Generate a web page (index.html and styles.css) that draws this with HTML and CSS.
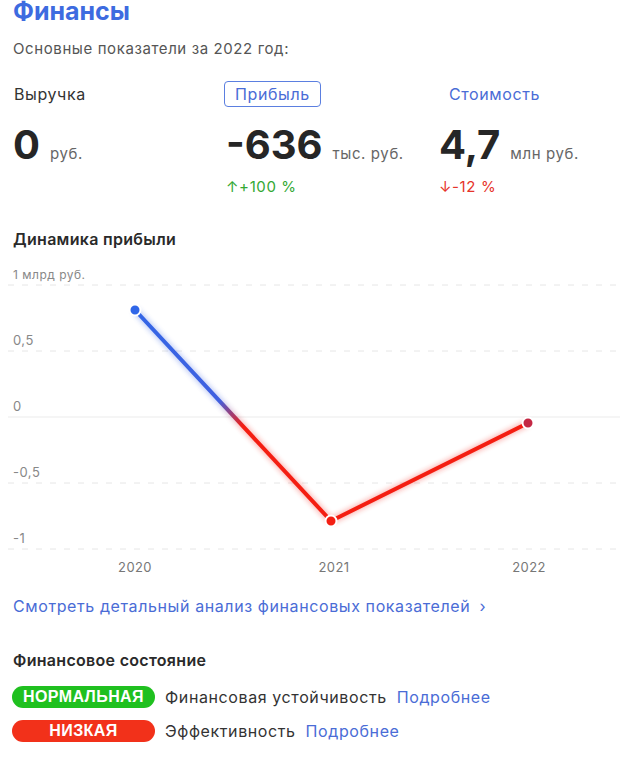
FILE: index.html
```html
<!DOCTYPE html>
<html lang="ru">
<head>
<meta charset="utf-8">
<link rel="stylesheet" href="styles.css">
</head>
<body>
<div class="page">
  <h1 class="title">Финансы</h1>
  <p class="subtitle">Основные показатели за 2022 год:</p>

  <div class="metrics">
    <div class="metric">
      <div class="tab">Выручка</div>
      <div class="value"><span class="num">0</span><span class="unit">руб.</span></div>
    </div>
    <div class="metric">
      <div class="tab tab-active">Прибыль</div>
      <div class="value"><span class="num">-636</span><span class="unit">тыс. руб.</span></div>
      <div class="delta up">↑+100 %</div>
    </div>
    <div class="metric">
      <div class="tab tab-link">Стоимость</div>
      <div class="value"><span class="num">4,7</span><span class="unit">млн руб.</span></div>
      <div class="delta down">↓-12 %</div>
    </div>
  </div>

  <h2 class="section">Динамика прибыли</h2>

  <svg class="chart" width="620" height="320" viewBox="0 260 620 320">
    <defs>
      <linearGradient id="lg1" gradientUnits="userSpaceOnUse" x1="135" y1="310" x2="331" y2="521">
        <stop offset="0" stop-color="#3366e6"/>
        <stop offset="0.43" stop-color="#4060e0"/>
        <stop offset="0.55" stop-color="#f41e12"/>
        <stop offset="1" stop-color="#f41e12"/>
      </linearGradient>
      <filter id="glow" x="-20%" y="-20%" width="140%" height="140%">
        <feGaussianBlur stdDeviation="2.5"/>
      </filter>
    </defs>
    <g class="grid">
      <line x1="8" y1="285" x2="620" y2="285" class="dash"/>
      <line x1="8" y1="351" x2="620" y2="351" class="dash"/>
      <line x1="8" y1="417" x2="620" y2="417" class="zero"/>
      <line x1="8" y1="483" x2="620" y2="483" class="dash"/>
      <line x1="8" y1="549" x2="620" y2="549" class="dash"/>
    </g>
    <g class="ylabels">
      <text x="13" y="279" class="top">1 млрд руб.</text>
      <text x="13" y="345">0,5</text>
      <text x="13" y="411">0</text>
      <text x="13" y="477">-0,5</text>
      <text x="13" y="543">-1</text>
    </g>
    <g class="xlabels">
      <text x="135" y="572">2020</text>
      <text x="334" y="572">2021</text>
      <text x="529" y="572">2022</text>
    </g>
    <g filter="url(#glow)" opacity="0.3">
      <polyline points="135,310 331,521" stroke="url(#lg1)" stroke-width="7" fill="none"/>
      <polyline points="331,521 528,423" stroke="#f41e12" stroke-width="7" fill="none"/>
    </g>
    <line x1="135" y1="310" x2="331" y2="521" stroke="url(#lg1)" stroke-width="4" stroke-linecap="round"/>
    <line x1="331" y1="521" x2="528" y2="423" stroke="#f41e12" stroke-width="4" stroke-linecap="round"/>
    <circle cx="135" cy="310" r="5.5" fill="#2f66e8" stroke="#fff" stroke-width="2"/>
    <circle cx="331" cy="521" r="5.5" fill="#f41e12" stroke="#fff" stroke-width="2"/>
    <circle cx="528" cy="423" r="5.5" fill="#c42844" stroke="#fff" stroke-width="2"/>
  </svg>

  <a class="more" href="#">Смотреть детальный анализ финансовых показателей <span class="chev">›</span></a>

  <h2 class="section state">Финансовое состояние</h2>
  <div class="status-row">
    <span class="badge green">НОРМАЛЬНАЯ</span>
    <span class="label">Финансовая устойчивость</span>
    <a class="link" href="#">Подробнее</a>
  </div>
  <div class="status-row">
    <span class="badge red">НИЗКАЯ</span>
    <span class="label">Эффективность</span>
    <a class="link" href="#">Подробнее</a>
  </div>
</div>
</body>
</html>
```

FILE: styles.css
```css
* { box-sizing: border-box; }
html, body { margin: 0; padding: 0; background: #fff; }
body { font-family: Inter, "Noto Sans", sans-serif; color: #333; letter-spacing: 0.6px; }
.page { padding: 0 0 0 13px; width: 620px; overflow: hidden; }

.title {
  margin: -4px 0 0 0;
  font-size: 25px;
  line-height: 30px;
  font-weight: 700;
  color: #3d6be0;
  letter-spacing: 0;
}
.subtitle {
  margin: 13px 0 0 0;
  font-size: 15px;
  line-height: 20px;
  color: #555;
}

.metrics {
  display: grid;
  grid-template-columns: 213px 213px 181px;
  margin-top: 22px;
}
.metric { display: flex; flex-direction: column; align-items: flex-start; }
.tab {
  font-size: 16px;
  height: 26px;
  line-height: 24px;
  border: 1px solid transparent;
  color: #333;
}
.tab-active {
  color: #4a6cd6;
  border-color: #5b7fe0;
  border-radius: 4px;
  padding: 0 10px;
  margin-left: -2px;
}
.tab-link { color: #4a6cd6; padding: 0 10px; margin-left: -1px; }

.value {
  display: flex;
  align-items: baseline;
  margin-top: 16px;
  height: 44px;
}
.num {
  font-size: 40px;
  line-height: 44px;
  font-weight: 700;
  color: #262626;
  letter-spacing: 0;
}
.unit {
  font-size: 15px;
  color: #666;
  margin-left: 10px;
}
.delta {
  font-size: 15px;
  line-height: 18px;
  margin-top: 11px;
}
.up { color: #33a833; }
.down { color: #e6332a; }

.section {
  margin: 0;
  font-size: 16px;
  line-height: 20px;
  font-weight: 600;
  color: #2a2a2a;
  letter-spacing: 0.3px;
}
.metrics + .section { margin-top: 33px; }

.chart { display: block; margin: 11px 0 0 -13px; }
.grid line { stroke-width: 1; }
.grid .dash { stroke: #e6e6e6; stroke-dasharray: 6 8; }
.grid .zero { stroke: #ebebeb; }
.ylabels text { font-family: Inter, sans-serif; font-size: 13px; fill: #888; letter-spacing: 0.5px; }
.ylabels text.top { font-size: 12px; }
.xlabels text { font-family: Inter, sans-serif; font-size: 13px; fill: #777; text-anchor: middle; letter-spacing: 0.4px; }

.more {
  display: block;
  margin-top: 16px;
  font-size: 16px;
  line-height: 20px;
  color: #4a6cd6;
  text-decoration: none;
}
.chev { margin-left: 4px; }

.section.state { margin-top: 34px; }

.status-row {
  display: flex;
  align-items: center;
  height: 24px;
  font-size: 16px;
  color: #333;
}
.section.state + .status-row { margin-top: 15px; }
.status-row + .status-row { margin-top: 10px; }
.badge {
  display: inline-block;
  width: 143px;
  height: 22px;
  line-height: 22px;
  border-radius: 11px;
  text-align: center;
  font-family: "Liberation Sans", Arial, sans-serif;
  font-weight: 700;
  font-size: 16px;
  letter-spacing: 0.4px;
  color: #fff;
  margin-left: -1px;
  margin-right: 10px;
}
.green { background: #1fc01f; }
.red { background: #f2311a; }
.label { color: #333; }
.link { color: #4a6cd6; text-decoration: none; margin-left: 10px; }
```
